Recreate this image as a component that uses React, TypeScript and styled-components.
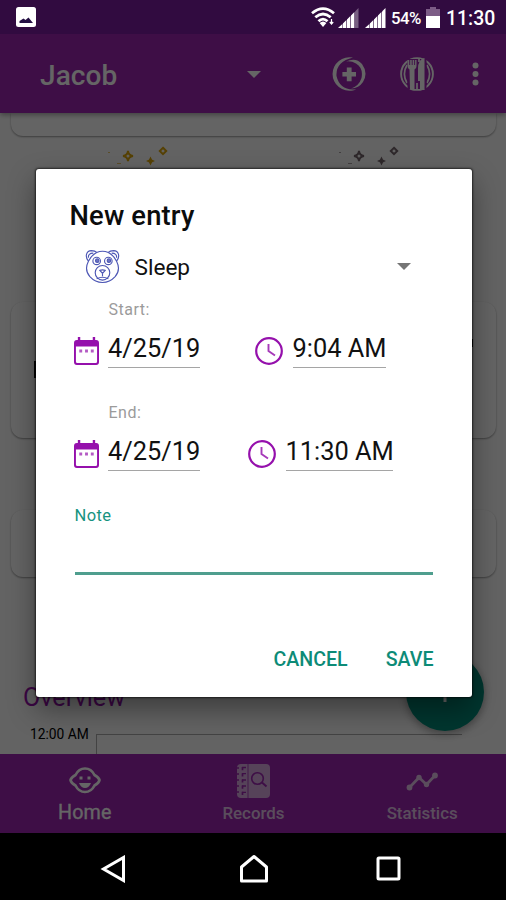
import React from "react";
import styled, { createGlobalStyle } from "styled-components";

const GlobalStyle = createGlobalStyle`
  * { box-sizing: border-box; }
  body { margin: 0; background: #000; font-family: Roboto, "Liberation Sans", sans-serif; }
`;

const Screen = styled.div`
  position: relative;
  width: 506px;
  height: 900px;
  overflow: hidden;
  display: flex;
  flex-direction: column;
`;

const StatusBar = styled.div`
  position: relative;
  z-index: 3;
  height: 34px;
  flex: none;
  display: flex;
  align-items: center;
  padding: 0 11px 0 16px;
  background: #310b40;
  color: #fff;
`;

const StatusIcons = styled.div`
  margin-left: auto;
  display: flex;
  align-items: center;
`;

const SignalPair = styled.div`
  display: flex;
  gap: 6px;
  margin: 2px 0 0 3px;
`;

const Battery = styled.span`
  font-size: 16.8px;
  font-weight: 500;
  line-height: 34px;
  margin: 2px 0 0 5px;
  width: 35px;
  letter-spacing: -0.6px;
  white-space: nowrap;
`;

const Clock = styled.span`
  font-size: 19.4px;
  font-weight: 500;
  line-height: 36px;
  width: 49px;
  margin: 3px 0 0 6px;
  white-space: nowrap;
`;

const AppBar = styled.header`
  height: 79px;
  flex: none;
  display: flex;
  align-items: center;
  padding: 0 27px 0 40px;
  background: #9c24b0;
  color: #fff;
  box-shadow: 0 2px 5px rgba(0, 0, 0, 0.35);
  z-index: 1;
  & > svg { margin-top: 2px; }
`;

const BabyName = styled.h1`
  margin: 3px 0 0;
  width: 207px;
  font-size: 28px;
  font-weight: 500;
  letter-spacing: 0.1px;
`;

const AppActions = styled.div`
  display: flex;
  align-items: center;
  margin-left: auto;
  svg:nth-child(2) { margin: 0 38px 0 34px; }
`;

const Content = styled.main`
  height: 641px;
  flex: none;
  display: flex;
  flex-direction: column;
  background: #fafafa;
  overflow: hidden;
`;

const Card = styled.section<{ $height: number; $gap: number; $open?: boolean }>`
  flex: none;
  height: ${(p) => p.$height}px;
  margin: ${(p) => p.$gap}px 10px 0 11px;
  border-radius: ${(p) => (p.$open ? "0 0 12px 12px" : "12px")};
  background: #fcfcfc;
  box-shadow: 0 1px 2px rgba(0, 0, 0, 0.38);
  display: flex;
  justify-content: space-between;
`;

const Marker = styled.span<{ $top: number; $height: number }>`
  width: 24px;
  height: ${(p) => p.$height}px;
  margin: ${(p) => p.$top}px 23px 0;
  background: #000;
`;

const Sparkles = styled.div`
  flex: none;
  display: flex;
  justify-content: space-between;
  height: 24px;
  padding: 10px 107px 0 106px;
`;

const Overview = styled.h2`
  margin: 105px 0 0 23px;
  font-size: 25.2px;
  line-height: 32px;
  font-weight: 400;
  color: #9510ac;
`;

const ChartRow = styled.div`
  flex: none;
  display: flex;
  align-items: flex-start;
  margin: 7px 44px 0 30px;
`;

const ChartLabel = styled.span`
  width: 66px;
  flex: none;
  font-size: 13.8px;
  line-height: 26px;
  color: #000;
`;

const Chart = styled.div`
  flex: 1;
  height: 40px;
  margin-top: 13px;
  border-top: 1px solid #aaa;
  border-left: 1px solid #aaa;
`;

const Fab = styled.div`
  position: absolute;
  left: 406px;
  top: 653px;
  width: 78px;
  height: 78px;
  border-radius: 50%;
  background: #008a78;
  box-shadow: 0 3px 9px rgba(0, 0, 0, 0.35);
  display: grid;
  place-items: center;
`;

const BottomNav = styled.nav`
  height: 79px;
  flex: none;
  display: grid;
  grid-template-columns: repeat(3, 1fr);
  background: #9c24b0;
  color: #fff;
`;

const Tab = styled.div<{ $active?: boolean }>`
  display: flex;
  flex-direction: column;
  align-items: center;
  padding: 9px 0 0 1px;
  opacity: ${(p) => (p.$active ? 1 : 0.72)};
  font-size: ${(p) => (p.$active ? 19.7 : 16.9)}px;
  letter-spacing: ${(p) => (p.$active ? 0.2 : 0)}px;
  line-height: 24px;
  font-weight: ${(p) => (p.$active ? 400 : 500)};
  -webkit-text-stroke: ${(p) => (p.$active ? "0.3px #fff" : "0")};
  svg { height: ${(p) => (p.$active ? 34 : 36)}px; margin-bottom: ${(p) => (p.$active ? 4 : 2)}px; }
`;

const SystemNav = styled.div`
  height: 67px;
  flex: none;
  display: flex;
  align-items: center;
  justify-content: space-between;
  padding: 4px 105px 0 99px;
  background: #000;
  svg:nth-child(2) { margin-left: 5px; }
`;

const Scrim = styled.div`
  position: absolute;
  inset: 34px 0 67px;
  z-index: 2;
  background: rgba(0, 0, 0, 0.605);
`;

const Dialog = styled.div`
  width: 436px;
  height: 528px;
  margin: 135px 0 0 35.5px;
  padding: 29px 39px 0 34px;
  border-radius: 3px;
  background: #fff;
  color: #111;
  box-shadow: 0 0 2px 1px rgba(0, 0, 0, 0.6), 0 12px 28px rgba(0, 0, 0, 0.4);
`;

const Title = styled.h2`
  margin: 0;
  font-size: 27.4px;
  line-height: 36px;
  font-weight: 500;
  letter-spacing: 0.15px;
  color: #0c0c0c;
`;

const TypeSelect = styled.div`
  display: flex;
  align-items: center;
  height: 42px;
  margin-top: 11px;
  padding: 0 22px 0 15px;
  font-size: 22.6px;
`;

const TypeName = styled.span`
  flex: 1;
  margin-left: 15px;
  line-height: 42px;
  padding-top: 3px;
`;

const FieldLabel = styled.div<{ $gap: number }>`
  margin: ${(p) => p.$gap}px 0 0 39px;
  font-size: 16px;
  line-height: 20px;
  letter-spacing: 0.5px;
  color: #9b9b9b;
`;

const DateTimeRow = styled.div`
  display: flex;
  align-items: flex-start;
  height: 48px;
  margin-top: 12px;
  padding-left: 4px;
  svg { margin-top: 5px; flex: none; }
`;

const Value = styled.span<{ $width: number; $gapAfter?: number }>`
  width: ${(p) => p.$width}px;
  height: 36px;
  margin-left: 9.500px;
  margin-right: ${(p) => p.$gapAfter ?? 0}px;
  border-bottom: 1.5px solid #a5a5a5;
  font-size: 25.4px;
  line-height: 33px;
  white-space: nowrap;
`;

const NoteField = styled.div`
  margin: 21px 0 0 5px;
  height: 71px;
  border-bottom: 3px solid #4f9e8e;
  font-size: 16.5px;
  line-height: 24px;
  letter-spacing: 0.4px;
  color: #16937f;
`;

const Actions = styled.div`
  display: flex;
  justify-content: flex-end;
  gap: 38px;
  margin: 71px -1px 0 0;
`;

const Action = styled.button`
  padding: 0;
  border: 0;
  background: none;
  font: 500 19.6px/28px Roboto, sans-serif;
  color: #0d8b77;
`;

const Wifi = () => (
  <svg width="24" height="21" viewBox="0 0 24 21" fill="none" stroke="#fff" strokeWidth="2.8">
    <path d="M1 6.2Q12-3 23 6.2M4.300 10.300Q12 3.700 19.700 10.300M7.500 14.200Q12 10 16.500 14.200" />
    <path d="M8.600 16Q12 13 15.400 16L12 20Z" fill="#fff" stroke="none" />
    <path d="M20.500 12v5M18.800 15l1.700 2 1.700-2" strokeWidth="1.200" />
  </svg>
);

const Signal = ({ weak }: { weak?: boolean }) => (
  <svg width="21" height="20" viewBox="0 0 21 20">
    <path d="M0 20 4.400 16V20ZM4.900 20V15.500L8.400 12V20ZM9 20V11.500L12.400 8V20ZM13 20V7.500L16.400 4V20Z" fill="#fff" />
    <path d="M17 20V3.500L20.500 0V20Z" fill="#fff" opacity={weak ? 0.35 : 1} />
  </svg>
);

const Caret = ({ color }: { color: string }) => (
  <svg width="14" height="7" viewBox="0 0 14 7"><path d="M0 0H14L7 7Z" fill={color} /></svg>
);

const Sparkle = ({ color }: { color: string }) => (
  <svg width="62" height="20" viewBox="0 0 62 20" fill="none" stroke={color}>
    <path d="M22 5Q22.600 9.400 27 10Q22.600 10.600 22 15Q21.400 10.600 17 10Q21.400 9.400 22 5Z" strokeWidth="1.900" />
    <path d="M57 1.800 60.200 5 57 8.200 53.800 5Z" strokeWidth="2" />
    <path d="M44.500 12l1 2 2 1-2 1-1 2-1-2-2-1 2-1Z" strokeWidth="1.300" fill={color} />
    <path d="M2 6.500h2M11 17.500h4" strokeWidth="1.200" opacity=".6" />
  </svg>
);

const Bear = () => (
  <svg width="35" height="35" viewBox="0 0 36 35" fill="none" stroke="#4c56b4" strokeWidth="1.150">
    <path d="M3.500 12C-.5 7 1.500 1.200 6.500 1.200Q10.500 1.300 12 3Q18 .5 24 3Q25.500 1.300 29.500 1.200C34.500 1.200 36.500 7 32.500 12Q37 21 31 28Q25.500 34 18 34T5 28Q-1 21 3.500 12Z" />
    <path d="M3.500 8.500Q3 3.800 8.500 3.800M32.500 8.500Q33 3.800 27.500 3.800M3.500 12Q6.500 6 12 3M32.500 12Q29.500 6 24 3" />
    <ellipse cx="12" cy="11.800" rx="3.900" ry="3.800" /><circle cx="12.600" cy="11.500" r="1.800" fill="#6a72c0" />
    <ellipse cx="24" cy="11.800" rx="3.900" ry="3.800" /><circle cx="24.600" cy="11.500" r="1.800" fill="#6a72c0" />
    <circle cx="18" cy="24" r="7.500" />
    <path d="M15.300 21.500Q18 20.500 20.700 21.500L18 24.500ZM18 24.500V27.500M12 30Q18 27 24 30" />
  </svg>
);

const Calendar = () => (
  <svg width="25" height="28" viewBox="0 0 26 28" preserveAspectRatio="none">
    <path d="M4 0H6.500V3H19.500V0H22V3H23Q26 3 26 6V25Q26 28 23 28H3Q0 28 0 25V6Q0 3 3 3H4ZM2 9.500V24.500Q2 26 3.500 26H22.500Q24 26 24 24.500V9.500Z" fill="#9510ac" fillRule="evenodd" />
    <path d="M5.500 12.500h3v3h-3zM11.500 12.500h3v3h-3zM17.500 12.500h3v3h-3z" fill="#b45ac4" />
  </svg>
);

const ClockIcon = () => (
  <svg width="28" height="28" viewBox="0 0 28 28" fill="none" stroke="#9510ac">
    <circle cx="14" cy="14" r="12.800" strokeWidth="2.200" />
    <path d="M13.500 7V14L20 18.500" strokeWidth="1.900" stroke="#a63ab9" />
  </svg>
);

const MedicineIcon = () => (
  <svg width="34" height="34" viewBox="0 0 34 34" fill="#fff">
    <path d="M22 .8A16.700 16.700 0 1 0 22 33.200A15.300 15.300 0 0 1 22 .8Z" transform="translate(0 0)" opacity="0" />
    <path d="M21 .6A16.800 16.800 0 1 0 21 33.400Q23 33 24 32.200Q8 34 4.500 19Q3.500 5 21 .6Z" />
    <path d="M14 4.500Q24 0 30 7Q36.500 16 31 25Q27 31 19 31.500Q27 29 29.500 21Q31.500 11 24 6.500Q19.500 3.800 14 4.500Z" />
    <path d="M14.800 10.500h4.800v4.500h4.400v4.600h-4.400v4.600h-4.800v-4.600h-4.400V15h4.400Z" />
  </svg>
);

const MealIcon = () => (
  <svg width="34" height="34" viewBox="0 0 34 34" fill="none" stroke="#fff">
    <circle cx="17" cy="17" r="15.900" strokeWidth="1.900" />
    <path d="M7 8Q1.800 17 7 26M27 8Q32.200 17 27 26" strokeWidth="1.700" />
    <path d="M7.500 2H26.500V32H7.500Z" fill="#9c24b0" stroke="none" />
    <path d="M7.500 3V9Q7.500 12 9.500 12.500L10 32Q12 34.500 14.500 32L14.500 12.500Q16.500 12 16.500 9V3" fill="#fff" stroke="none" />
    <path d="M9.700 3V8M12.200 2V8M14.600 3V8" stroke="#9c24b0" strokeWidth=".9" />
    <path d="M24.500 1V33H20V24H18V12Q18 2 24.500 1Z" fill="#fff" stroke="none" />
    <path d="M19 1V5M17 26V33" strokeWidth="1.700" />
  </svg>
);

const MoreIcon = () => (
  <svg width="7" height="24" viewBox="0 0 7 24" fill="#fff">
    <circle cx="3.500" cy="3.500" r="3" /><circle cx="3.500" cy="12" r="3" /><circle cx="3.500" cy="20.500" r="3" />
  </svg>
);

const BabyIcon = () => (
  <svg width="32" height="28" viewBox="0 0 32 28" fill="none" stroke="#fff" strokeWidth="2.700">
    <path d="M16 2.500C20.500 2.500 23.500 5 25.500 9Q30 11.500 30.500 14Q30 17 25.500 19.500C23.500 23.500 20 26 16 26S8.500 23.500 6.500 19.500Q2 17 1.500 14Q2 11.500 6.500 9C8.500 5 11.500 2.500 16 2.500Z" />
    <path d="M10.500 12h3M18.500 12h3" strokeWidth="3.200" />
    <path d="M10 17H22Q20 22 16 22T10 17Z" fill="#fff" stroke="none" />
  </svg>
);

const RecordsIcon = () => (
  <svg width="34" height="36" viewBox="0 0 34 36">
    <path d="M5 1H30Q34 1 34 5V31Q34 35 30 35H5Q1 35 1 31V5Q1 1 5 1Z" fill="#fff" opacity=".85" />
    <path d="M6.500 4V33" stroke="#9c24b0" strokeWidth="1.700" strokeDasharray="3.200 3" />
    <path d="M0 5h3M0 11h3M0 17h3M0 23h3M0 29h3M6 4.500h4M6 10.700h4M6 17h4M6 23h4M6 29.300h4" stroke="#9c24b0" strokeWidth="1.300" />
    <path d="M12 1V35" stroke="#9c24b0" strokeWidth=".8" />
    <circle cx="21.500" cy="15.500" r="5.800" fill="none" stroke="#9c24b0" strokeWidth="1.600" />
    <path d="M26 19.500L30.500 23.500" stroke="#9c24b0" strokeWidth="2" />
  </svg>
);

const StatsIcon = () => (
  <svg width="32" height="36" viewBox="0 0 32 36" fill="#fff" stroke="#fff">
    <path d="M3.500 24.500 13 14.500 20.500 21.500 29 12.500" fill="none" strokeWidth="2.700" />
    <g stroke="none"><circle cx="3.500" cy="24.500" r="2.900" /><circle cx="13" cy="14.500" r="2.700" /><circle cx="20.500" cy="21.500" r="2.700" /><circle cx="29" cy="12.500" r="2.900" /></g>
  </svg>
);

export default function App() {
  return (
    <>
      <GlobalStyle />
      <Screen>
        <StatusBar>
          <svg width="20" height="20" viewBox="0 0 20 20">
            <rect width="20" height="20" rx="2.500" fill="#fff" />
            <path d="M3.500 16V14L7.500 11.500 9.500 13 12.500 10.500 17 16Z" fill="#251044" />
          </svg>
          <StatusIcons>
            <Wifi />
            <SignalPair>
              <Signal weak />
              <Signal />
            </SignalPair>
            <Battery>54%</Battery>
            <svg width="14" height="21" viewBox="0 0 14 21">
              <path d="M4 0H10V2H14V21H0V2H4Z" fill="#7c5c86" />
              <path d="M0 9H14V21H0Z" fill="#fff" />
            </svg>
            <Clock>11:30</Clock>
          </StatusIcons>
        </StatusBar>
        <AppBar>
          <BabyName>Jacob</BabyName>
          <Caret color="#fff" />
          <AppActions>
            <MedicineIcon />
            <MealIcon />
            <MoreIcon />
          </AppActions>
        </AppBar>
        <Content>
          <Card $height={23} $gap={0} $open />
          <Sparkles>
            <Sparkle color="#d9a40c" />
            <Sparkle color="#75666c" />
          </Sparkles>
          <Card $height={136} $gap={142}>
            <Marker $top={59} $height={17} />
            <Marker $top={37} $height={8} />
          </Card>
          <Card $height={67} $gap={72} />
          <Overview>Overview</Overview>
          <ChartRow>
            <ChartLabel>12:00 AM</ChartLabel>
            <Chart />
          </ChartRow>
        </Content>
        <Fab>
          <svg width="20" height="20" viewBox="0 0 20 20"><path d="M10 0V20M0 10H20" stroke="#fff" strokeWidth="3" /></svg>
        </Fab>
        <BottomNav>
          <Tab $active><BabyIcon />Home</Tab>
          <Tab><RecordsIcon />Records</Tab>
          <Tab><StatsIcon />Statistics</Tab>
        </BottomNav>
        <SystemNav>
          <svg width="27" height="28" viewBox="0 0 27 28" fill="none" stroke="#fff" strokeWidth="3"><path d="M24.500 2.500V25.500L4.500 14Z" /></svg>
          <svg width="30" height="29" viewBox="0 0 30 29" fill="none" stroke="#fff" strokeWidth="3" strokeLinejoin="round"><path d="M2.500 13 15 2.500 27.500 13V27H2.500Z" /></svg>
          <svg width="25" height="25" viewBox="0 0 25 25" fill="none" stroke="#fff" strokeWidth="3"><rect x="2" y="2" width="21" height="21" rx="1" /></svg>
        </SystemNav>
        <Scrim>
          <Dialog>
            <Title>New entry</Title>
            <TypeSelect>
              <Bear />
              <TypeName>Sleep</TypeName>
              <Caret color="#757575" />
            </TypeSelect>
            <FieldLabel $gap={13}>Start:</FieldLabel>
            <DateTimeRow>
              <Calendar />
              <Value $width={92} $gapAfter={55}>4/25/19</Value>
              <ClockIcon />
              <Value $width={93}>9:04 AM</Value>
            </DateTimeRow>
            <FieldLabel $gap={23}>End:</FieldLabel>
            <DateTimeRow>
              <Calendar />
              <Value $width={92} $gapAfter={48}>4/25/19</Value>
              <ClockIcon />
              <Value $width={107}>11:30 AM</Value>
            </DateTimeRow>
            <NoteField>Note</NoteField>
            <Actions>
              <Action>CANCEL</Action>
              <Action>SAVE</Action>
            </Actions>
          </Dialog>
        </Scrim>
      </Screen>
    </>
  );
}
